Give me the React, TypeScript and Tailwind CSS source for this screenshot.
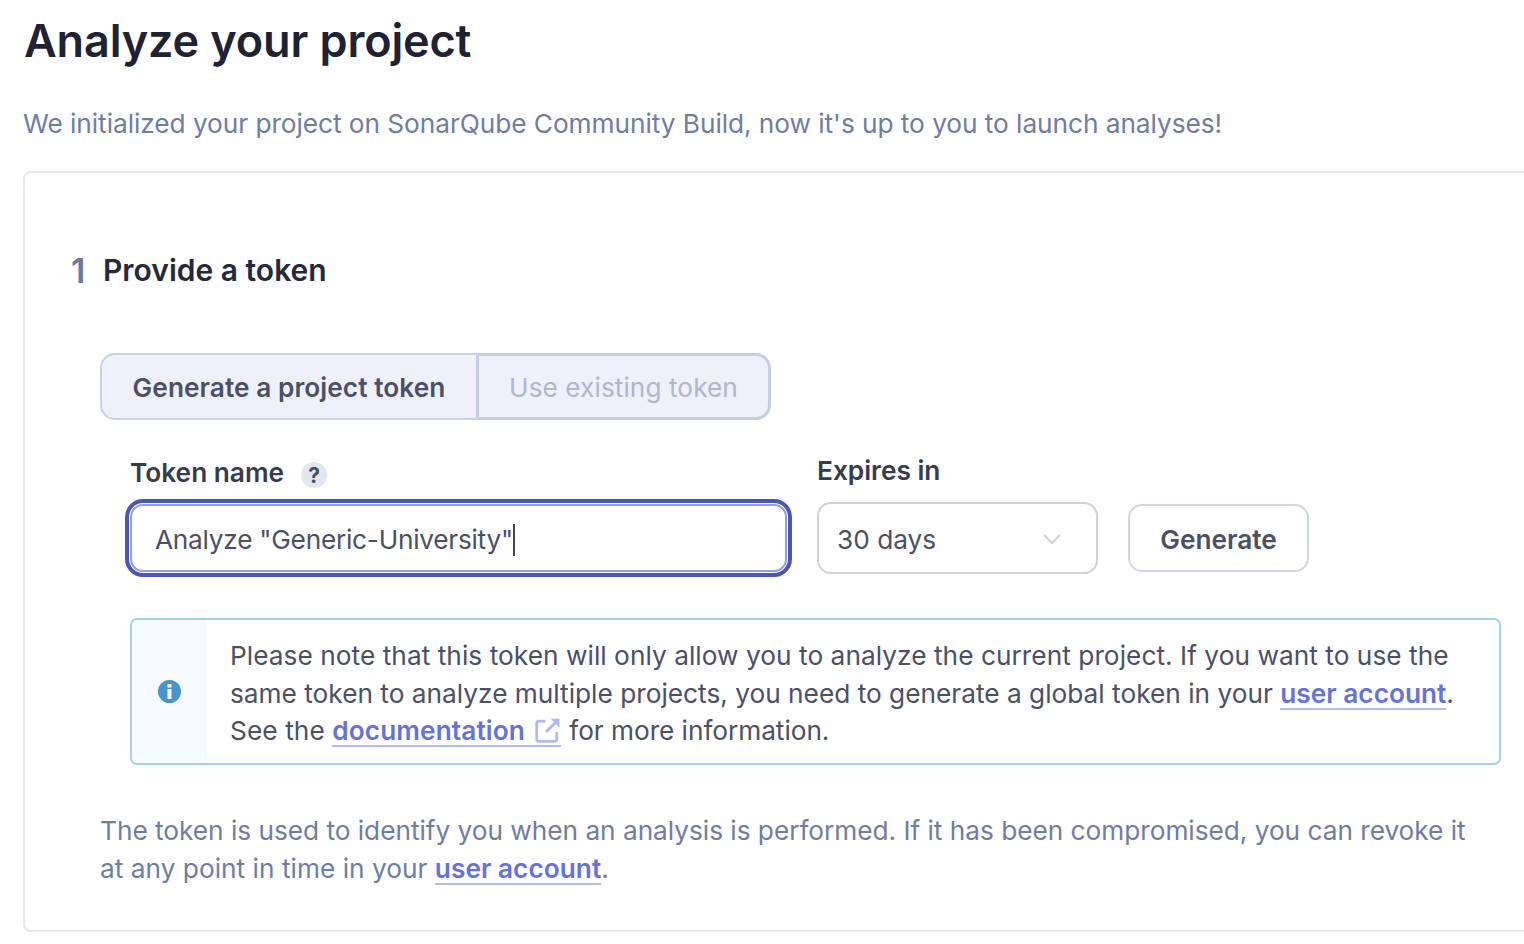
import React from 'react';

function TextLink({ children }: { children: React.ReactNode }) {
  return (
    <a href="#" className="inline-block h-[35px] border-b-2 border-[#b4bcf2] font-semibold leading-[37px] text-[#6572db]">
      {children}
    </a>
  );
}

function ExternalIcon() {
  return (
    <svg className="ml-[10px] mr-px inline-block h-[25px] w-[25px] align-[-3px]" viewBox="0 0 25 25" fill="none" stroke="#b1b9f3">
      <path d="M10.500 3.200H4Q1.700 3.200 1.700 5.500V21Q1.700 23.300 4 23.300H19.500Q21.800 23.300 21.800 21V14" strokeWidth="2.800" />
      <path d="M11 14L21 4" strokeWidth="3" />
      <path d="M15.500 .8H24.500V9.800Z" fill="#b1b9f3" stroke="none" />
    </svg>
  );
}

export default function App() {
  return (
    <main className="h-[944px] w-[1524px] overflow-hidden bg-white pl-[23px] pt-[14px] font-['Inter',sans-serif] text-[26.25px] text-[#4b5066]">
      <h1 className="h-[54px] whitespace-nowrap pl-px text-[45px] font-semibold leading-[54px] tracking-[-0.13px] text-[#1e2233]">
        Analyze your project
      </h1>
      <p className="mt-[37px] h-[38px] whitespace-nowrap leading-[38px] tracking-[-0.055px] text-[#6f7da4]">
        We initialized your project on SonarQube Community Build, now it's up to you to launch analyses!
      </p>

      <section className="mt-[28px] h-[761px] w-[1540px] rounded-[8px] border-2 border-[#e4e8f5] pl-[45px] pt-[76px]">
        <h2 className="flex h-[42px] items-center whitespace-nowrap font-semibold">
          <span className="w-[33px] pl-px text-[34px] text-[#6a779f]">1</span>
          <span className="pt-px text-[30px] text-[#252a3b]">Provide a token</span>
        </h2>

        <div className="ml-[30px] mt-[62px] flex h-[67px] w-[671px] rounded-[15px] bg-[#eef1fa]">
          <button className="w-[376px] whitespace-nowrap rounded-l-[15px] border-2 border-r-0 border-[#c9d1e4] pt-[3px] font-semibold tracking-[0.05px]">
            Generate a project token
          </button>
          <button className="w-[295px] whitespace-nowrap rounded-r-[15px] border-[3px] border-[#c6cee2] pt-[3px] tracking-[0.05px] text-[#b0b6cb]">
            Use existing token
          </button>
        </div>

        <form className="ml-[55px] mt-[32px] flex h-[126px]">
          <div className="w-[667px]">
            <label className="ml-[5px] flex h-[47px] items-start whitespace-nowrap font-semibold leading-[42px] text-[#363b4e]">
              Token name
              <span className="ml-[17px] mt-[10px] flex h-[26px] w-[26px] items-center justify-center rounded-full bg-[#e1e6f3] text-[21px] font-bold leading-none text-[#464b60]">?</span>
            </label>
            <div className="h-[78px] rounded-[18px] border-4 border-[#4b56bd] p-px">
              <div className="flex h-full items-center whitespace-nowrap rounded-[13px] border-2 border-[#939dea] pl-[23px] pt-[3px]">
                <span className="tracking-[-0.26px]">Analyze "Generic-University"</span>
                <span className="h-[32px] w-[2px] bg-[#3f4458]" />
              </div>
            </div>
          </div>
          <div className="ml-[25px] w-[281px]">
            <label className="block h-[50px] whitespace-nowrap font-semibold leading-[38px] text-[#363b4e]">Expires in</label>
            <div className="flex h-[72px] items-center justify-between whitespace-nowrap rounded-[14px] border-2 border-[#d2d2d2] pl-[18px] pr-[35px] pt-[3px]">
              30 days
              <svg className="h-[12px] w-[18px]" viewBox="0 0 18 12" fill="none" stroke="#d0d0d0" strokeWidth="2">
                <path d="M1 1L9 9L17 1" />
              </svg>
            </div>
          </div>
          <button className="ml-[30px] mt-[52px] h-[68px] w-[181px] rounded-[14px] border-2 border-[#d0d6e9] pt-[3px] font-semibold">
            Generate
          </button>
        </form>

        <aside className="ml-[60px] mt-[40px] flex h-[147px] w-[1371px] overflow-hidden rounded-[7px] border-2 border-[#a2d3ed]">
          <div className="flex w-[75px] items-center justify-center bg-[#f5fbff]">
            <svg className="h-[23px] w-[23px]" viewBox="0 0 23 23">
              <circle cx="11.500" cy="11.500" r="11.500" fill="#4594cb" />
              <path d="M9.500 4H13.500V7.500H9.500ZM9.500 9H13.500V19H9.500Z" fill="#fff" />
            </svg>
          </div>
          <div className="pl-[23px] pt-[17px] leading-[37.5px]">
            <p className="h-[37.5px] whitespace-nowrap tracking-[0.04px]">Please note that this token will only allow you to analyze the current project. If you want to use the</p>
            <p className="h-[37.5px] whitespace-nowrap">same token to analyze multiple projects, you need to generate a global token in your <TextLink>user account</TextLink>.</p>
            <p className="h-[37.5px] whitespace-nowrap">
              <span className="tracking-[0.08px]">See the </span>
              <TextLink>
                <span className="tracking-[0.08px]">documentation</span>
                <ExternalIcon />
              </TextLink>
              <span className="ml-px tracking-[-0.05px]"> for more information.</span>
            </p>
          </div>
        </aside>

        <div className="ml-[30px] mt-[47px] leading-[37.5px] text-[#6f7da4]">
          <p className="h-[37.5px] whitespace-nowrap tracking-[-0.03px]">The token is used to identify you when an analysis is performed. If it has been compromised, you can revoke it</p>
          <p className="h-[37.5px] whitespace-nowrap tracking-[0.02px]">at any point in time in your <TextLink>user account</TextLink>.</p>
        </div>
      </section>
    </main>
  );
}
